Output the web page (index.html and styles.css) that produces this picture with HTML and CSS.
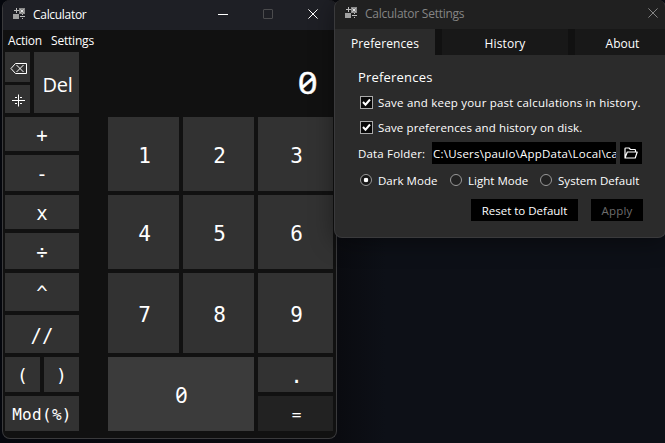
FILE: index.html
```html
<!DOCTYPE html>
<html lang="en">
<head>
<meta charset="utf-8">
<title>Calculator</title>
<link rel="stylesheet" href="styles.css">
</head>
<body>
<svg width="0" height="0" class="defs">
  <symbol id="logo" viewBox="0 0 12 12">
    <rect x="6" y="0" width="6" height="6" fill="#8a8a8a"/>
    <rect x="0" y="6" width="6" height="5" fill="#a0a0a0"/>
    <path d="M1 2.5h5M3.5 0v5M7 8.5h5" stroke="#bbb" fill="none"/>
    <path d="M9 6h1v1H9zM9 10h1v1H9z" fill="#bbb"/>
    <path d="M7.5 1.5l3 3M10.5 1.5l-3 3" stroke="#eee" stroke-width=".9"/>
  </symbol>
  <symbol id="close" viewBox="0 0 10 10"><path d="M.4.4l9.2 9.2M9.6.4L.4 9.6" stroke="currentColor" fill="none"/></symbol>
</svg>
<main class="desktop">
  <section class="window calc">
    <header class="calc-title">
      <svg class="logo"><use href="#logo"/></svg>
      <span class="calc-name">Calculator</span>
      <span class="controls">
        <svg width="10" height="10"><path d="M0 5.5h10" stroke="#fff"/></svg>
        <svg width="10" height="10"><rect x=".5" y=".5" width="9" height="9" rx=".5" fill="none" stroke="#4b4b4d"/></svg>
        <svg width="10" height="10"><use href="#close"/></svg>
      </span>
    </header>
    <nav class="menu"><span>Action</span><span>Settings</span></nav>
    <div class="top">
      <div class="edit">
        <button class="key back" aria-label="Backspace"><svg width="18" height="13" viewBox="0 0 18 13" fill="none" stroke="#fff"><path d="M1 6.5L5.5 1.5h11v10h-11zM6.5 3l7 7M13.5 3l-7 7"/></svg></button>
        <button class="key sign" aria-label="Plus or minus"><svg width="13" height="13" viewBox="0 0 13 13" stroke="#fff" fill="none"><path d="M0 6.5h13M6.5 .5v12"/><path d="M3 3.5h2M8 3.5h2M3 9.5h2M8 9.5h2"/></svg></button>
      </div>
      <button class="key del">Del</button>
      <output class="display zero">0</output>
    </div>
    <div class="pad">
      <button class="key op r1">+</button>
      <button class="key op r2">-</button>
      <button class="key op r3">x</button>
      <button class="key op r4">÷</button>
      <button class="key op r5">^</button>
      <button class="key op r6">//</button>
      <div class="parens r7"><button class="key op">(</button><button class="key op">)</button></div>
      <button class="key op mod r8">Mod(%)</button>
      <button class="key num a c1">1</button><button class="key num a c2">2</button><button class="key num a c3">3</button>
      <button class="key num b c1">4</button><button class="key num b c2">5</button><button class="key num b c3">6</button>
      <button class="key num c c1">7</button><button class="key num c c2">8</button><button class="key num c c3">9</button>
      <button class="key num hover zero">0</button>
      <button class="key num dot">.</button>
      <button class="key num eq">=</button>
    </div>
  </section>

  <section class="window settings">
    <header class="set-title">
      <svg class="logo"><use href="#logo"/></svg>
      <span class="set-name">Calculator Settings</span>
      <svg class="set-close" width="10" height="10"><use href="#close"/></svg>
    </header>
    <nav class="tabs"><span class="tab active">Preferences</span><span class="tab history">History</span><span class="tab about">About</span></nav>
    <div class="body">
      <h2>Preferences</h2>
      <label class="check"><svg width="13" height="13"><rect x=".5" y=".5" width="12" height="12" fill="#090909" stroke="#aaa"/><path d="M3 6l2.5 2.7L10 3.5" fill="none" stroke="#fff" stroke-width="2"/></svg><span class="keep">Save and keep your past calculations in history.</span></label>
      <label class="check second"><svg width="13" height="13"><rect x=".5" y=".5" width="12" height="12" fill="#090909" stroke="#aaa"/><path d="M3 6l2.5 2.7L10 3.5" fill="none" stroke="#fff" stroke-width="2"/></svg><span class="disk">Save preferences and history on disk.</span></label>
      <div class="folder">
        <span class="flabel">Data Folder:</span>
        <div class="path"><span>C:\Users\paulo\AppData\Local\ca</span></div>
        <button class="browse" aria-label="Browse"><svg width="14" height="12" viewBox="0 0 14 12" fill="none" stroke="#fff" stroke-width="1.2" stroke-linejoin="round"><path d="M1 10.5V1.8Q1 1 1.8 1H5l1.5 1.5h4.2q.8 0 .8.8V5M1 11L3.3 5H13.2L11.2 11Z"/></svg></button>
      </div>
      <div class="modes">
        <label><i class="radio on"></i><span>Dark Mode</span></label>
        <label><i class="radio"></i><span>Light Mode</span></label>
        <label><i class="radio"></i><span>System Default</span></label>
      </div>
      <div class="actions"><button class="reset">Reset to Default</button><button class="apply">Apply</button></div>
    </div>
  </section>
</main>
</body>
</html>
```
FILE: styles.css
```css
* { box-sizing: border-box; }
body { margin: 0; font: 12px/16px "Open Sans", "Noto Sans", sans-serif; color: #fff; }
button { border: 0; padding: 0; margin: 0; font: inherit; color: inherit; letter-spacing: inherit; }
svg { display: block; flex: none; }
span { white-space: nowrap; }
.defs { position: absolute; }
.desktop { position: relative; width: 665px; height: 443px; overflow: hidden; background: linear-gradient(90deg, #05070d, #0a0b10 51%, #0d1017 58%); }
.window { position: absolute; top: 0; overflow: hidden; border: 1px solid #3a3a3c; border-top: 0; border-radius: 8px; }
.calc { left: 2px; width: 335px; height: 439px; background: #111; }
.calc-title { display: flex; align-items: center; height: 30px; padding: 0 18px 0 10px; background: #1e1f25; }
.logo { width: 12px; height: 12px; margin-top: -2px; }
.set-title .logo { margin-top: -3px; }
.calc-name { margin-left: 8px; letter-spacing: -.3px; }
.controls { display: flex; gap: 35px; margin: -2px 0 0 auto; }
.menu { display: flex; height: 22px; padding: 3px 0 0 5px; gap: 9px; letter-spacing: -.2px; }
.top { display: flex; height: 61px; padding-left: 2px; gap: 4px; }
.edit { display: grid; grid-template-rows: 30px 28px; gap: 3px; width: 25px; }
.key { display: flex; align-items: center; justify-content: center; background: #323232; }
.back { padding: 2px 0 0 2px; }
.sign { padding: 3px 0 0 2px; }
.del { width: 45px; font-size: 20px; letter-spacing: -.3px; padding: 4px 0 0 2px; }
.display { margin: 0 20px 0 auto; font: 30.5px/60px "Noto Sans", sans-serif; -webkit-text-stroke: .3px #fff; transform: scaleX(1.14); }
.pad { display: grid; grid-template-columns: 74px 21px 71px 71px 75px; grid-template-rows: 34px 36px 34px 36px 38px 38px 35px 35px; gap: 4px; padding: 4px 0 0 2px; }
.op { grid-column: 1; font: 19px "DejaVu Sans Mono", monospace; }
.r1 { grid-row: 1; padding-top: 1px; } .r2 { grid-row: 2; padding-top: 2px; } .r3 { grid-row: 3; padding-top: 1px; } .r4 { grid-row: 4; padding-top: 1px; }
.r5 { grid-row: 5; padding-top: 1px; } .r6 { grid-row: 6; padding-top: 2px; } .r7 { grid-row: 7; } .r8 { grid-row: 8; }
.parens { display: grid; grid-template-columns: 35px 35px; gap: 4px; }
.parens .op { grid-column: auto; font-size: 18px; padding-top: 2px; }
.mod { font-size: 16px; letter-spacing: .3px; padding-top: 1px; }
.num { font: 21px "DejaVu Sans Mono", monospace; padding: 3px 0 0 2px; }
.a { grid-row: 1 / 3; } .b { grid-row: 3 / 5; } .c { grid-row: 5 / 7; padding-top: 4px; }
.c1 { grid-column: 3; } .c2 { grid-column: 4; } .c3 { grid-column: 5; }
.hover { grid-column: 3 / 5; grid-row: 7 / 9; background: #3b3b3b; padding: 1px 0 0 1px; font: 21.5px "Noto Sans", sans-serif; }
.zero { font-feature-settings: "zero" 1; }
.dot { grid-column: 5; grid-row: 7; }
.eq { grid-column: 5; grid-row: 8; background: #222; font-size: 16px; padding-top: 1px; }

.settings { left: 334px; width: 332px; height: 238px; background: #2b2b2b; box-shadow: 0 4px 24px #0006; }
.set-title { display: flex; align-items: center; height: 29px; padding: 0 7px 0 10px; background: #202020; color: #858585; }
.set-name { margin: -1px 0 0 8px; letter-spacing: -.25px; }
.set-close { margin: -3px 0 0 auto; }
.tabs { display: flex; height: 26px; background: #111; line-height: 29px; text-align: center; }
.tab { flex: none; }
.active { width: 100px; letter-spacing: .12px; background: #2b2b2b; }
.history { width: 126px; margin-left: 7px; letter-spacing: .15px; background: #181818; }
.about { width: 95px; margin-left: 7px; background: #181818; }
.body { padding: 14px 0 0 23px; font-size: 11.5px; }
h2 { margin: 0; font-size: 13px; font-weight: 400; line-height: 17px; letter-spacing: .2px; }
.check { display: flex; align-items: center; height: 16px; margin: 8px 0 0 2px; gap: 5px; }
.check span { position: relative; top: 1px; }
.keep { letter-spacing: .21px; }
.disk { letter-spacing: .12px; }
.second { margin-top: 9px; }
.folder { display: flex; height: 22px; margin-top: 7px; line-height: 23px; letter-spacing: .17px; }
.flabel { width: 74px; }
.path { width: 184px; padding-left: 1px; overflow: hidden; background: #000; letter-spacing: .22px; }
.browse { display: flex; align-items: center; justify-content: center; width: 22px; margin-left: 4px; background: #000; }
.modes { display: flex; height: 16px; margin: 8px 0 0 2px; letter-spacing: .03px; }
.modes label { display: flex; align-items: center; gap: 6px; width: 90px; }
.modes span { position: relative; top: 1px; }
.radio { flex: none; width: 12px; height: 12px; border: 1px solid #999; border-radius: 50%; background: #222; }
.on { background: radial-gradient(#fff 0 2px, #181818 2.6px); }
.actions { display: flex; height: 22px; margin: 11px 0 0 113px; gap: 13px; }
.actions button { padding-top: 2px; background: #000; }
.reset { width: 107px; }
.apply { width: 52px; color: #6d6d6d; letter-spacing: .2px; }
```
